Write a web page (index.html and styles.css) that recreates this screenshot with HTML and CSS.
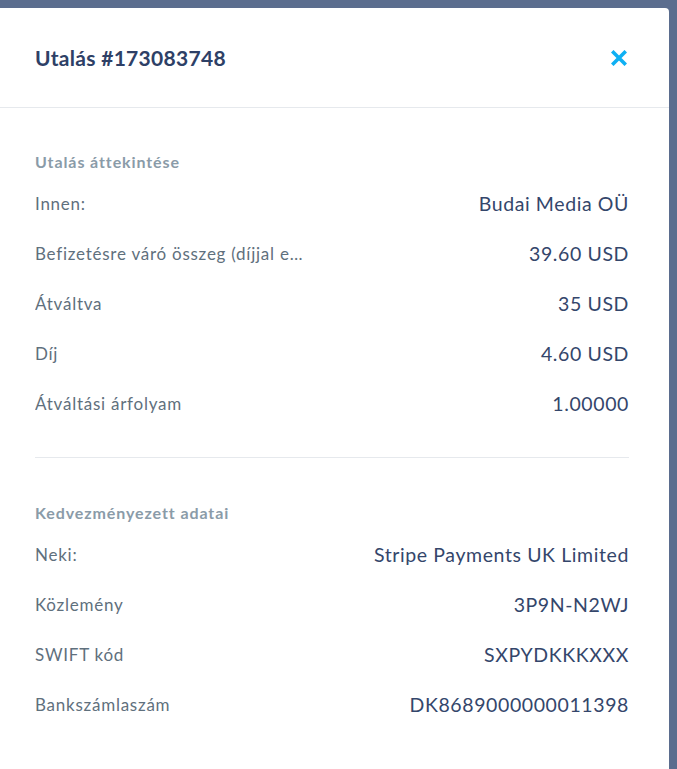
FILE: index.html
```html
<!DOCTYPE html>
<html lang="hu">
<head>
<meta charset="utf-8">
<title>Utalás #173083748</title>
<link rel="stylesheet" href="styles.css">
</head>
<body>
<div class="modal">
  <div class="modal-header">
    <h1 class="modal-title">Utalás #173083748</h1>
    <button class="close-btn" aria-label="Bezárás">
      <svg width="16" height="16" viewBox="0 0 16 16"><path d="M2.5 2.5 L13.5 13.5 M13.5 2.5 L2.5 13.5" stroke="#0fb0f3" stroke-width="3.6" stroke-linecap="square"/></svg>
    </button>
  </div>
  <div class="section">
    <h2 class="section-title">Utalás áttekintése</h2>
    <div class="row"><span class="label">Innen:</span><span class="value">Budai Media OÜ</span></div>
    <div class="row"><span class="label" title="Befizetésre váró összeg (díjjal együtt)">Befizetésre váró összeg (díjjal együtt)</span><span class="value">39.60 USD</span></div>
    <div class="row"><span class="label">Átváltva</span><span class="value">35 USD</span></div>
    <div class="row"><span class="label">Díj</span><span class="value">4.60 USD</span></div>
    <div class="row"><span class="label">Átváltási árfolyam</span><span class="value">1.00000</span></div>
  </div>
  <div class="section section-second">
    <h2 class="section-title">Kedvezményezett adatai</h2>
    <div class="row"><span class="label">Neki:</span><span class="value">Stripe Payments UK Limited</span></div>
    <div class="row"><span class="label">Közlemény</span><span class="value">3P9N-N2WJ</span></div>
    <div class="row"><span class="label">SWIFT kód</span><span class="value">SXPYDKKKXXX</span></div>
    <div class="row"><span class="label">Bankszámlaszám</span><span class="value">DK8689000000011398</span></div>
  </div>
</div>
</body>
</html>
```
FILE: styles.css
```css
html, body {
  margin: 0;
  padding: 0;
  background: #5b6d8e;
  height: 100%;
  overflow: hidden;
}
body {
  font-family: Lato, "Open Sans", sans-serif;
}
.modal {
  margin-top: 8px;
  width: 669px;
  height: 761px;
  background: #ffffff;
  border-top-right-radius: 4px;
  overflow: hidden;
}
.modal-header {
  height: 99px;
  border-bottom: 1px solid #e6e9ed;
  display: flex;
  align-items: center;
  justify-content: space-between;
  padding: 0 42px 0 35px;
}
.modal-title {
  margin: 0;
  font-size: 21px;
  font-weight: 700;
  letter-spacing: 0.3px;
  color: #2e4066;
}
.close-btn {
  border: 0;
  background: none;
  padding: 0;
  width: 16px;
  height: 16px;
  display: flex;
  cursor: pointer;
}
.section {
  margin: 0 40px 0 35px;
  padding: 42px 0 29px;
  border-bottom: 1px solid #e6e9ed;
}
.section-second {
  padding-top: 43px;
  border-bottom: 0;
}
.section-title {
  margin: 0 0 4px;
  font-size: 16px;
  line-height: 24px;
  font-weight: 700;
  letter-spacing: 0.9px;
  color: #8a9ba8;
}
.row {
  height: 50px;
  display: flex;
  align-items: center;
  justify-content: space-between;
}
.label {
  font-size: 17px;
  letter-spacing: 0.75px;
  color: #5f707d;
  max-width: 270px;
  white-space: nowrap;
  overflow: hidden;
  text-overflow: ellipsis;
}
.value {
  font-size: 19.5px;
  letter-spacing: 0.6px;
  color: #34466b;
  white-space: nowrap;
}
```
